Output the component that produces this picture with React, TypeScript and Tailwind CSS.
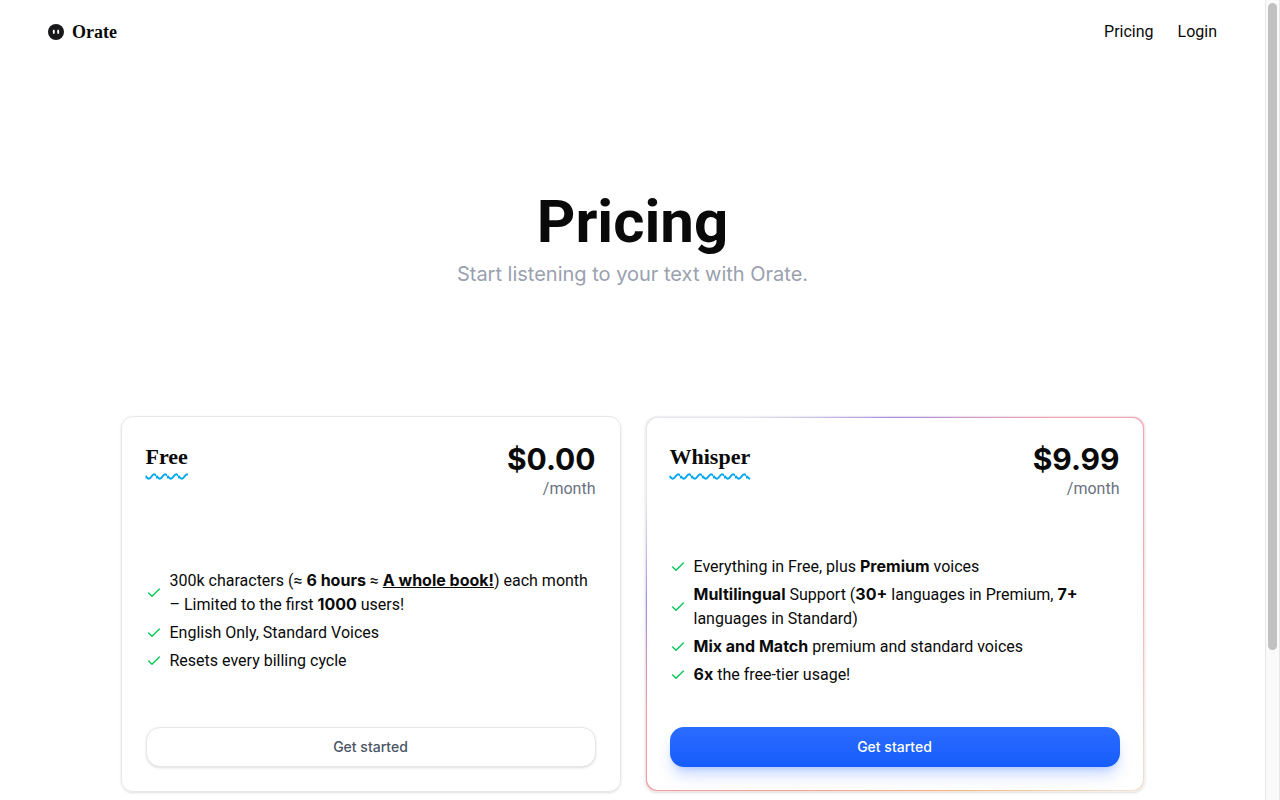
import type { ReactNode } from "react";
import { Check } from "lucide-react";

type Plan = {
    name: string;
    price: string;
    featured: boolean;
    features: ReactNode[];
};

const plans: Plan[] = [
    {
        name: "Free",
        price: "$0.00",
        featured: false,
        features: [
            <>
                300k characters (≈ <b>6 hours</b> ≈ <b className="underline">A whole book!</b>) each month – Limited to the first <b>1000</b> users!
            </>,
            "English Only, Standard Voices",
            "Resets every billing cycle",
        ],
    },
    {
        name: "Whisper",
        price: "$9.99",
        featured: true,
        features: [
            <>Everything in Free, plus <b>Premium</b> voices</>,
            <><b>Multilingual</b> Support (<b>30+</b> languages in Premium, <b>7+</b> languages in Standard)</>,
            <><b>Mix and Match</b> premium and standard voices</>,
            <><b>6x</b> the free-tier usage!</>,
        ],
    },
];

function Logo() {
    return (
        <svg viewBox="0 0 16 16" className="size-4" aria-hidden="true">
            <circle cx="8" cy="8" r="8" fill="#18181b" />
            <ellipse cx="5.8" cy="7.7" rx="1" ry="2.2" fill="#fff" />
            <ellipse cx="10.2" cy="7.7" rx="1" ry="2.2" fill="#fff" />
        </svg>
    );
}

function Header() {
    return (
        <header className="flex h-16 items-center justify-between px-12">
            <a href="#" className="flex items-center gap-2">
                <Logo />
                <span className="font-['Liberation_Serif',serif] text-lg font-bold">Orate</span>
            </a>
            <nav className="flex gap-6 font-[Roboto,sans-serif]">
                <a href="#pricing">Pricing</a>
                <a href="#login">Login</a>
            </nav>
        </header>
    );
}

function PlanCard({ plan }: { plan: Plan }) {
    return (
        <article
            className={
                plan.featured
                    ? "flex flex-1 rounded-xl border border-gray-100/80 bg-[conic-gradient(#a98be0,#f3a6b4_40deg,#f3a6b4_67deg,#f5b5a8_90deg,#f0e2d0_127deg,#f2b880_160deg,#f2a898_200deg,#ee9fa4_247deg,#a98be0_270deg,#e5e7eb_293deg,#e5e7eb_320deg,#a98be0)] bg-origin-border p-px shadow-sm"
                    : "flex flex-1 rounded-xl border border-gray-200 p-px shadow-sm"
            }
        >
            <div className="flex flex-1 flex-col rounded-[11px] bg-white p-[23px]">
                <div className="flex items-start justify-between">
                    <h2 className="font-['Liberation_Serif',serif] text-[22px] leading-8 font-bold underline decoration-sky-500 decoration-wavy decoration-2 underline-offset-[9px]">
                        {plan.name}
                    </h2>
                    <div className="text-right">
                        <p className="text-3xl font-bold">{plan.price}</p>
                        <p className="font-[Roboto,sans-serif] text-gray-500">/month</p>
                    </div>
                </div>
                <ul className="mt-[54px] mb-10 flex flex-1 flex-col justify-center gap-1 font-[Roboto,sans-serif] [&_b]:font-[Inter,sans-serif] [&_b]:leading-4 [&_b]:font-bold">
                    {plan.features.map((feature, i) => (
                        <li key={i} className="flex items-center gap-2">
                            <Check className="size-4 shrink-0 text-green-500" />
                            <span>{feature}</span>
                        </li>
                    ))}
                </ul>
                <button
                    type="button"
                    className={
                        plan.featured
                            ? "h-10 rounded-[14px] bg-linear-to-b from-[#2b6cff] to-[#155dfc] text-sm font-medium text-white shadow-lg shadow-blue-600/25"
                            : "h-10 rounded-[14px] border border-gray-200 bg-white text-sm font-medium text-gray-600 shadow-sm"
                    }
                >
                    Get started
                </button>
            </div>
        </article>
    );
}

export default function App() {
    return (
        <div className="flex h-screen bg-white font-[Inter,sans-serif] text-[#0a0a0a]">
            <div className="flex-1 overflow-y-auto [scrollbar-width:none]">
                <Header />
                <main className="pb-32">
                    <div className="flex flex-col items-center gap-2 py-32 text-center">
                        <h1 className="font-[Roboto,sans-serif] text-6xl font-bold">Pricing</h1>
                        <p className="text-xl text-gray-400">Start listening to your text with Orate.</p>
                    </div>
                    <div className="mx-auto flex max-w-5xl gap-6">
                        {plans.map((plan) => (
                            <PlanCard key={plan.name} plan={plan} />
                        ))}
                    </div>
                </main>
            </div>
            <div className="w-[15px] border-x border-gray-200 bg-[#fafafa] px-[2px] py-[3px]" aria-hidden="true">
                <div className="h-[81.5%] rounded-full bg-[#c1c1c1]" />
            </div>
        </div>
    );
}
